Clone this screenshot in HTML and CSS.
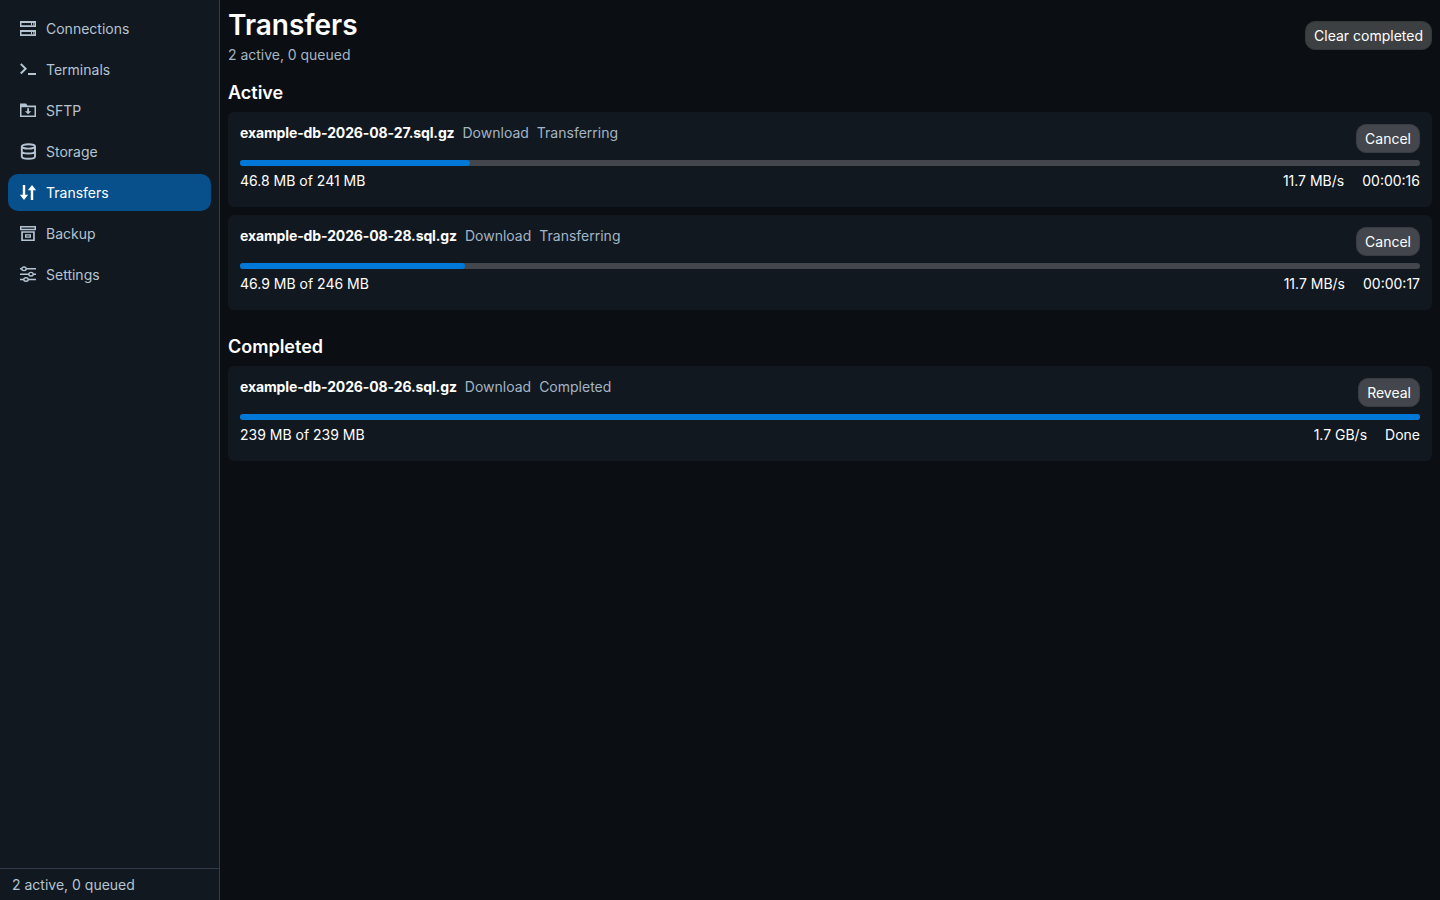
FILE: index.html
```html
<!DOCTYPE html>
<html lang="en">
<head>
<meta charset="UTF-8">
<meta name="viewport" content="width=device-width, initial-scale=1.0">
<title>Transfers</title>
<link rel="stylesheet" href="styles.css">
</head>
<body>

<div class="app">
    <aside class="sidebar">
        <nav class="nav">
            <a class="nav-item">
                <svg class="icon" viewBox="0 0 16 16"><path fill-rule="evenodd" d="M0 0h16v6H0zM1.500 2v2.200h13V2zM0 9h16v6H0zM1.500 11v2.200h13V11z"/><path d="M11 2h1v2.200h-1zM13 2h.700v2.200H13zM11 11h1v2.200h-1zM13 11h.700v2.200H13z"/></svg>
                <span>Connections</span>
            </a>
            <a class="nav-item">
                <svg class="icon" viewBox="0 0 16 16"><path class="stroke" d="M.8 1.900 5.600 6.700.8 11.500M8 12h8"/></svg>
                <span>Terminals</span>
            </a>
            <a class="nav-item">
                <svg class="icon" viewBox="0 0 16 16"><path fill-rule="evenodd" d="M0 .5h6l1.500 2H16V14H0zM1.500 4.300v8.300h13V4.300zM7.200 5.300h1.800v2.900h2.300L8.100 11.300 4.900 8.200h2.300z"/></svg>
                <span>SFTP</span>
            </a>
            <a class="nav-item">
                <svg class="icon" viewBox="0 0 16 16"><g class="stroke disk"><ellipse cx="8.400" cy="2.400" rx="6.600" ry="2.200"/><path d="M1.800 2.400v10c0 1.300 2.900 2.300 6.600 2.300s6.600-1 6.600-2.300v-10M1.800 7.200c0 1.300 2.900 2.300 6.600 2.300s6.600-1 6.600-2.300"/></g></svg>
                <span>Storage</span>
            </a>
            <a class="nav-item active">
                <svg class="icon" viewBox="0 0 16 16"><path d="M2.800 0h2.400v9.800h2.900L4 15-.1 9.800h2.900zM10.800 15V5.200H7.900L12 0l4.100 5.200h-2.900V15z"/></svg>
                <span>Transfers</span>
            </a>
            <a class="nav-item">
                <svg class="icon" viewBox="0 0 16 16"><path fill-rule="evenodd" d="M0 0h16v4.300H0zM1.500 1.600v1.100h13V1.600zM1.200 5.200h13.600V15H1.200zM2.900 6.700v6.800h10.200V6.700zM5 8.200h6v3.600H5zM6.400 9.500v1h3.200v-1z"/></svg>
                <span>Backup</span>
            </a>
            <a class="nav-item">
                <svg class="icon" viewBox="0 0 16 16"><g class="stroke thin"><path d="M0 1.800h1.800M6.200 1.800H16M0 7.200h8.800M13.200 7.200H16M0 12.500h3.800M8.200 12.500H16"/><ellipse cx="4" cy="1.800" rx="2.200" ry="1.800"/><ellipse cx="11" cy="7.200" rx="2.200" ry="1.800"/><ellipse cx="6" cy="12.500" rx="2.200" ry="1.800"/></g></svg>
                <span>Settings</span>
            </a>
        </nav>
        <footer class="status">2 active, 0 queued</footer>
    </aside>

    <main class="content">
        <header class="page-header">
            <div>
                <h1>Transfers</h1>
                <p class="summary">2 active, 0 queued</p>
            </div>
            <button type="button">Clear completed</button>
        </header>

        <section class="group">
            <h2>Active</h2>
            <article class="card">
                <div class="card-top">
                    <div class="info">
                        <strong>example-db-2026-08-27.sql.gz</strong>
                        <span>Download</span>
                        <span>Transferring</span>
                    </div>
                    <button type="button">Cancel</button>
                </div>
                <div class="progress"><div class="bar" style="width: 19.45%"></div></div>
                <div class="stats">
                    <span class="size">46.8 MB of 241 MB</span>
                    <span>11.7 MB/s</span>
                    <span>00:00:16</span>
                </div>
            </article>
            <article class="card">
                <div class="card-top">
                    <div class="info">
                        <strong>example-db-2026-08-28.sql.gz</strong>
                        <span>Download</span>
                        <span>Transferring</span>
                    </div>
                    <button type="button">Cancel</button>
                </div>
                <div class="progress"><div class="bar" style="width: 19.06%"></div></div>
                <div class="stats">
                    <span class="size">46.9 MB of 246 MB</span>
                    <span>11.7 MB/s</span>
                    <span>00:00:17</span>
                </div>
            </article>
        </section>

        <section class="group">
            <h2>Completed</h2>
            <article class="card">
                <div class="card-top">
                    <div class="info">
                        <strong>example-db-2026-08-26.sql.gz</strong>
                        <span>Download</span>
                        <span>Completed</span>
                    </div>
                    <button type="button">Reveal</button>
                </div>
                <div class="progress"><div class="bar" style="width: 100%"></div></div>
                <div class="stats">
                    <span class="size">239 MB of 239 MB</span>
                    <span>1.7 GB/s</span>
                    <span>Done</span>
                </div>
            </article>
        </section>
    </main>
</div>

</body>
</html>
```

FILE: styles.css
```css
* {
    box-sizing: border-box;
}
body {
    margin: 0;
    font-family: Inter, sans-serif;
    font-size: 14px;
    line-height: 17px;
    color: #fff;
    background-color: #0b0e12;
}
.app {
    display: flex;
    height: 100vh;
}

/* Sidebar */
.sidebar {
    display: flex;
    flex-direction: column;
    width: 220px;
    flex-shrink: 0;
    background-color: #111820;
    border-right: 1px solid #303a49;
    color: #b5c4d2;
}
.nav {
    display: flex;
    flex-direction: column;
    gap: 4px;
    flex: 1;
    padding: 10px 8px;
}
.nav-item {
    display: flex;
    align-items: center;
    gap: 10px;
    height: 37px;
    padding: 0 12px;
    border-radius: 10px;
}
.nav-item.active {
    background-color: #07508c;
    color: #fff;
}
.icon {
    width: 16px;
    height: 16px;
    fill: currentColor;
    overflow: visible;
}
.stroke {
    fill: none;
    stroke: currentColor;
    stroke-width: 2;
}
.disk {
    stroke-width: 1.9;
}
.thin {
    stroke-width: 1.4;
}
.status {
    height: 32px;
    padding: 7px 12px;
    border-top: 1px solid #303a49;
}

/* Page */
.content {
    flex: 1;
    padding: 7px 8px 8px;
}
.page-header {
    display: flex;
    justify-content: space-between;
    align-items: center;
    height: 57px;
}
h1 {
    margin: 0 0 4px;
    font-size: 28px;
    line-height: 34px;
    font-weight: 600;
}
h2 {
    margin: 0 0 8px;
    font-size: 18px;
    line-height: 22px;
    font-weight: 600;
}
.summary {
    margin: 0;
    color: #a3b5c4;
    letter-spacing: -0.02px;
}
button {
    height: 29px;
    padding: 0 8px;
    border: 1px solid #393c42;
    border-radius: 10px;
    background-color: #43464c;
    color: #fff;
    font: inherit;
}
.page-header button {
    border-color: #35383b;
    background-color: #3d4043;
}
.group {
    margin-top: 18px;
}
.group + .group {
    margin-top: 26px;
}
.card {
    height: 95px;
    padding: 12px;
    border-radius: 6px;
    background-color: #111820;
}
.card + .card {
    margin-top: 8px;
}
.card-top {
    display: flex;
    justify-content: space-between;
    align-items: flex-start;
    height: 36px;
}
.info {
    display: flex;
    gap: 8px;
    color: #a3b5c4;
}
.info strong {
    font-weight: 700;
    letter-spacing: -0.12px;
    color: #fff;
}
.progress {
    height: 6px;
    border-radius: 3px;
    background-color: #43464d;
}
.bar {
    height: 100%;
    border-radius: 3px;
    background-color: #0078d7;
}
.stats {
    display: flex;
    gap: 18px;
    margin-top: 6px;
}
.size {
    flex: 1;
}
```
